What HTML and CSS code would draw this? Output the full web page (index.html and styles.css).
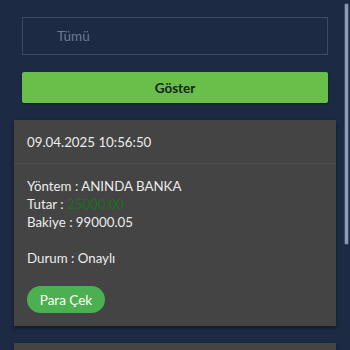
FILE: index.html
```html
<!DOCTYPE html>
<html lang="tr">
<head>
<meta charset="utf-8">
<link rel="stylesheet" href="styles.css">
</head>
<body>
<div class="page">
  <div class="filter">
    <div class="select">Tümü</div>
    <button class="show-btn">Göster</button>
  </div>
  <div class="card">
    <div class="card-head">09.04.2025 10:56:50</div>
    <div class="card-body">
      <div class="line">Yöntem : ANINDA BANKA</div>
      <div class="line">Tutar : <span class="amount">25000.00</span></div>
      <div class="line">Bakiye : 99000.05</div>
      <div class="line gap">Durum : Onaylı</div>
      <button class="pay-btn">Para Çek</button>
    </div>
  </div>
  <div class="card next"></div>
</div>
<div class="scrollbar"></div>
</body>
</html>
```
FILE: styles.css
```css
html, body {
  margin: 0;
  padding: 0;
  background: #1c2b43;
  font-family: Lato, "Open Sans", sans-serif;
  height: 350px;
  overflow: hidden;
}
.page {
  padding: 17px 14px 0;
}
.filter {
  padding: 0 8px;
  display: flex;
  flex-direction: column;
  gap: 17px;
}
.select {
  box-sizing: border-box;
  height: 38px;
  border: 1px solid #3c4b64;
  padding-left: 34px;
  display: flex;
  align-items: center;
  color: #6c7a92;
  font-size: 13.5px;
}
.show-btn {
  height: 31px;
  border: none;
  background: #6abf4b;
  color: #16241a;
  font-family: inherit;
  font-weight: bold;
  font-size: 13.5px;
  border-radius: 2px;
  box-shadow: 0 1px 2px rgba(0,0,0,0.4);
}
.card {
  margin-top: 17px;
  background: #444444;
  box-shadow: 0 2px 4px rgba(0,0,0,0.45);
  color: #ececec;
  font-size: 13.3px;
}
.card-head {
  height: 43px;
  display: flex;
  align-items: center;
  padding-left: 13px;
  border-bottom: 1px solid #4e4e4e;
}
.card-body {
  padding: 13px 13px 13px;
}
.line {
  line-height: 18px;
}
.line.gap {
  margin-top: 18px;
}
.amount {
  color: #1d6e1d;
}
.pay-btn {
  display: block;
  margin-top: 19px;
  height: 27px;
  width: 78px;
  border: none;
  border-radius: 14px;
  background: #4caf50;
  color: #ffffff;
  font-family: inherit;
  font-size: 13.5px;
  padding: 0;
}
.card.next {
  height: 40px;
}
.scrollbar {
  position: absolute;
  top: 3px;
  left: 344px;
  width: 3px;
  height: 240px;
  background: #8d9bb3;
  border: 1px solid #3d4c66;
  border-radius: 2px;
}
```
